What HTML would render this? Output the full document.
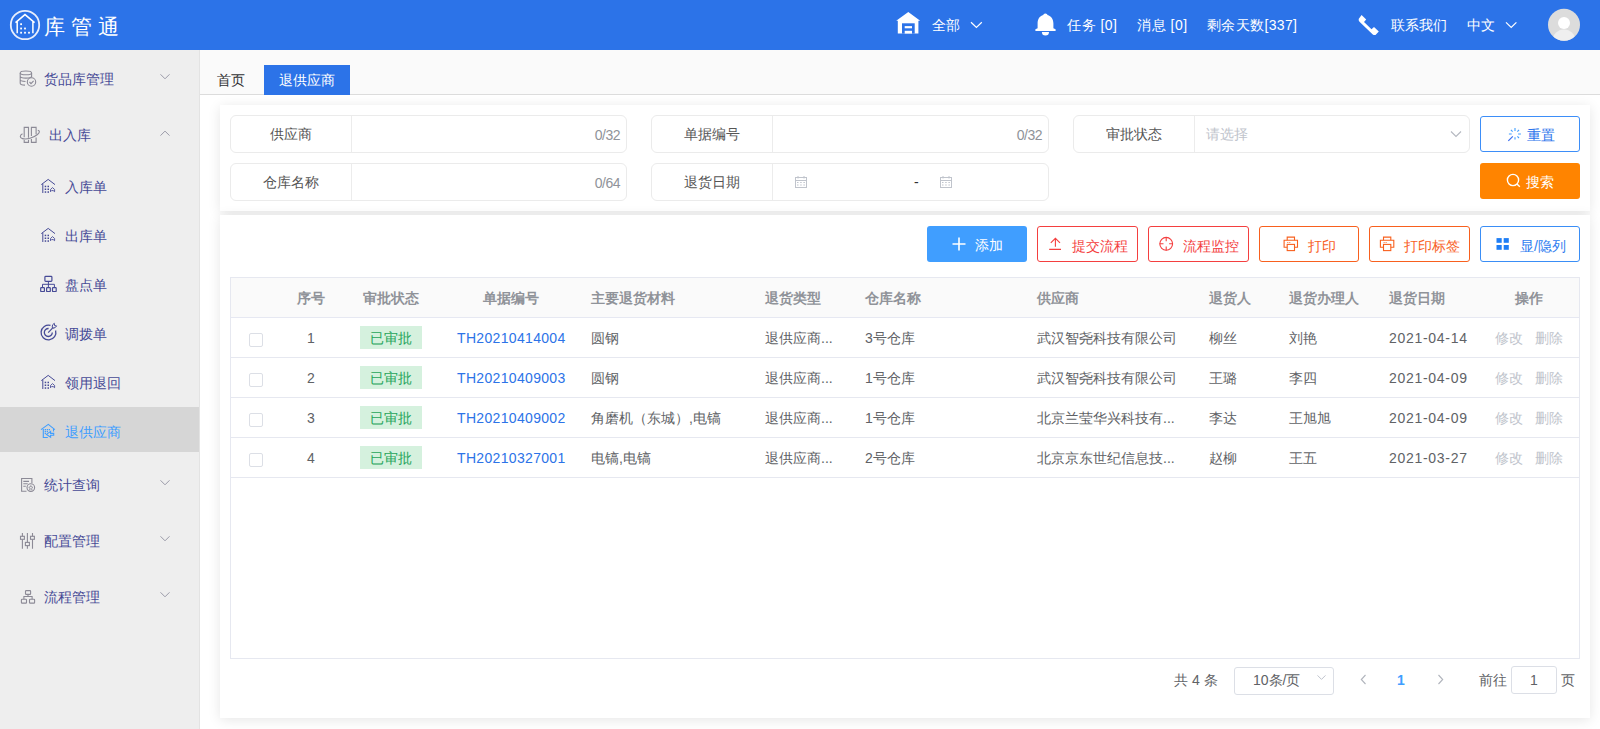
<!DOCTYPE html>
<html><head><meta charset="utf-8">
<style>
*{margin:0;padding:0;box-sizing:border-box}
html,body{width:1600px;height:729px;overflow:hidden;background:#fff;font-family:"Liberation Sans",sans-serif;font-size:14px;color:#606266}
.abs{position:absolute}
#hdr{position:absolute;left:0;top:0;width:1600px;height:50px;background:#2c73e8;color:#fff}
#side{position:absolute;left:0;top:50px;width:200px;height:679px;background:#eeeeee;border-right:1px solid #e3e3e3}
.t{position:absolute;white-space:nowrap;line-height:20px}
.card{position:absolute;background:#fff;box-shadow:0 2px 12px 0 rgba(0,0,0,.1)}
.inp{position:absolute;height:38px;border:1px solid #ebebeb;border-radius:6px;background:#fff}
.lb{position:absolute;left:0;top:0;width:121px;height:36px;border-right:1px solid #ececec;text-align:center;line-height:36px;color:#555}
.cnt{position:absolute;right:6px;top:9px;line-height:20px;font-size:14px;letter-spacing:-0.5px;color:#909399}
.ph{position:absolute;left:132px;top:8px;line-height:20px;color:#c0c4cc}
.btn{position:absolute;border-radius:3px;box-sizing:border-box}
.ob{width:100px;height:36px;border:1px solid;background:#fff}
.th{color:#909399;font-weight:bold}
.td{color:#606266}
.cb{width:14px;height:14px;border:1px solid #dcdfe6;border-radius:2px;background:#fff}
.tag{width:62px;height:23px;background:#d5f1de;color:#25a55a;text-align:center;line-height:25px}
</style></head><body>
<div id="hdr">
<svg class="abs" style="left:0;top:0" width="130" height="50" viewBox="0 0 130 50">
<circle cx="25" cy="25" r="14.2" fill="none" stroke="#e8eefc" stroke-width="1.8"/>
<path d="M15.5 22.6 L25 14.6 L34.6 22.6 M17.2 21.4 V33.2 M32.9 21.4 V33.2" fill="none" stroke="#fff" stroke-width="1.5"/>
<g fill="#fff"><rect x="20.2" y="23.3" width="1.8" height="1.8"/><rect x="20.2" y="27.6" width="1.8" height="1.8"/><rect x="24.1" y="27.6" width="1.8" height="1.8"/><rect x="20.2" y="31.8" width="1.8" height="1.8"/><rect x="24.1" y="31.8" width="1.8" height="1.8"/><rect x="28.1" y="31.8" width="1.8" height="1.8"/></g>
</svg>
<div class="t" style="left:44px;top:14px;font-size:21px;line-height:26px;letter-spacing:6px;color:#fff">库管通</div>
<svg class="abs" style="left:890px;top:0" width="100" height="50" viewBox="890 0 100 50">
<path d="M908.3 12 L920.2 20.8 L918.4 20.8 V33.6 H897.8 V20.8 H896.2 Z" fill="#fff"/>
<rect x="902" y="23.3" width="12.7" height="10.3" fill="#2c73e8"/>
<rect x="904.7" y="26.1" width="7.3" height="2.2" fill="#fff"/><rect x="904.7" y="30.8" width="7.3" height="2.8" fill="#fff"/>
<path d="M971 22.3 L976.4 27.5 L981.8 22.3" fill="none" stroke="#fff" stroke-width="1.2"/>
</svg>
<div class="t" style="left:932px;top:15px">全部</div>
<svg class="abs" style="left:1030px;top:0" width="30" height="50" viewBox="1030 0 30 50">
<path d="M1045.3 13.6 C1044 13.6 1043.5 14.5 1043.3 15.1 C1039.5 16.2 1037.6 19.5 1037.6 23.5 V28.3 L1035.4 29.2 V31.1 H1055.6 V29.2 L1053.4 28.3 V23.5 C1053.4 19.5 1051.3 16.2 1047.5 15.1 C1047.3 14.5 1046.7 13.6 1045.3 13.6 Z" fill="#fff"/>
<path d="M1041.9 32 H1049 A3.55 3.6 0 0 1 1041.9 32 Z" fill="#fff"/>
</svg>
<div class="t" style="left:1067px;top:15px;letter-spacing:0.5px">任务 [0]</div>
<div class="t" style="left:1137px;top:15px;letter-spacing:0.55px">消息 [0]</div>
<div class="t" style="left:1207px;top:15px;letter-spacing:0.35px">剩余天数[337]</div>
<svg class="abs" style="left:1350px;top:0" width="40" height="50" viewBox="1350 0 40 50">
<path d="M1361.6 15 L1366.2 19.5 L1364 22 L1371.5 29.2 L1374 27 L1378.8 31.6 L1375.5 35 C1374.5 35.3 1373.5 35 1372.5 34.2 L1359.5 21.8 C1358.8 21 1358.5 20 1358.8 18.8 Z" fill="#fff"/>
</svg>
<div class="t" style="left:1391px;top:15px">联系我们</div>
<div class="t" style="left:1467px;top:15px">中文</div>
<svg class="abs" style="left:1500px;top:0" width="100" height="50" viewBox="1500 0 100 50">
<path d="M1506 22.3 L1511.2 27.5 L1516.4 22.3" fill="none" stroke="#fff" stroke-width="1.2"/>
<defs><clipPath id="av"><circle cx="1564" cy="24.7" r="16"/></clipPath></defs>
<circle cx="1564" cy="24.7" r="16" fill="#dcdcdc"/>
<g clip-path="url(#av)"><ellipse cx="1564" cy="41" rx="11.5" ry="11.5" fill="#efefef"/></g>
<circle cx="1564" cy="22.9" r="6" fill="#fff"/>
</svg>
</div>
<div id="side">
<div class="abs" style="left:0;top:357px;width:199px;height:45px;background:#d6d6d6"></div>
<svg class="abs" style="left:0;top:-50px" width="200" height="729" viewBox="0 0 200 729">
<g fill="none" stroke="#8c8a96" stroke-width="1.1">
 <!-- db icon -->
 <ellipse cx="25.9" cy="72.9" rx="5.7" ry="1.9"/>
 <path d="M20.2 72.9 V83.2 C20.2 84.3 22.2 85 25 85.1 M31.6 72.9 V77.5 M20.2 76.3 C20.2 77.4 22.6 78.1 25.9 78.1 C29.2 78.1 31.6 77.4 31.6 76.3 M20.2 79.8 C20.2 80.8 22.3 81.4 25.5 81.5"/>
 <circle cx="31.5" cy="82" r="4.2" fill="#eeeeee"/>
 <path d="M29.5 82 L31 83.6 L33.6 80.8"/>
 <!-- in-out icon -->
 <path d="M24.2 137.2 V127.4 H28.5 V137.8 M24.2 140 V142.4 H28.5 V139.7 M31.4 136 V127.4 H36.1 V134.2 M31.4 139 V142.4 H36.1 V137.6"/>
 <path d="M22.5 133.8 C19.6 135.5 19.5 137.7 22.5 138.6 C26.5 139.8 33.5 137.8 37.5 134.5 C40 132.5 40 130.8 37.8 130.2"/>
 <!-- stats icon -->
 <path d="M26.5 491.2 H21.6 V478.5 H31.9 V483"/>
 <path d="M23.3 481.4 H29 M23.3 483.8 H27.7 M23.3 486.3 H25.8"/>
 <circle cx="30.8" cy="487.6" r="3.8"/>
 <path d="M30.8 485.5 L31.5 487 L32.8 487.2 L31.8 488.2 L32.1 489.6 L30.8 488.9 L29.5 489.6 L29.8 488.2 L28.8 487.2 L30.1 487 Z" stroke-width="0.8"/>
 <!-- config icon -->
 <path d="M22.4 533 V548.7 M27.4 533 V548.7 M32.5 533 V548.7"/>
 <rect x="20.5" y="536.3" width="3.9" height="3" fill="#eeeeee"/>
 <rect x="30.5" y="536.3" width="3.9" height="3" fill="#eeeeee"/>
 <rect x="25.4" y="542.4" width="4" height="3.2" fill="#eeeeee"/>
 <!-- flow icon -->
 <rect x="25.5" y="590.6" width="5.1" height="3.8" rx="0.7"/>
 <path d="M28 594.4 V596.5 M23.9 599.3 V596.5 H32.1 V599.3"/>
 <rect x="21.4" y="599.3" width="5.1" height="3.8" rx="0.7"/><rect x="29.5" y="599.3" width="5.1" height="3.8" rx="0.7"/>
</g>
<g fill="none" stroke="#9a9aa8" stroke-width="1">
 <path d="M160.5 74.3 L165 78.8 L169.5 74.3"/>
 <path d="M160.5 135.6 L165 131.1 L169.5 135.6"/>
 <path d="M160.5 480.3 L165 484.8 L169.5 480.3"/>
 <path d="M160.5 536.3 L165 540.8 L169.5 536.3"/>
 <path d="M160.5 592.3 L165 596.8 L169.5 592.3"/>
</g>
<g fill="none" stroke="#464a96" stroke-width="1">
 <!-- house icons (入库单, 出库单, 领用退回) -->
 <g id="hs"><path d="M41.3 184.6 L48.2 179.4 L55 184.6 M42.8 183.8 V193"/>
 <g fill="#464a96" stroke="none"><rect x="44.7" y="185.7" width="1.5" height="1.5"/><rect x="47.5" y="185.7" width="1.5" height="1.5"/><rect x="44.7" y="188.5" width="1.5" height="1.5"/><rect x="47.5" y="188.5" width="1.5" height="1.5"/><rect x="44.7" y="191.3" width="1.5" height="1.5"/><rect x="47.5" y="191.3" width="1.5" height="1.5"/></g>
 <path d="M50.5 189.5 L52.5 187.6 L54.6 189.5 V191.7 L53.2 190.6 H51.6 L50.5 191.7 Z" stroke-width="0.9"/></g>
 <use href="#hs" y="49"/>
 <use href="#hs" y="196"/>
 <!-- org chart (盘点单) -->
 <rect x="44.9" y="276.4" width="7" height="4.9" rx="0.8" stroke-width="1.2"/>
 <path d="M48.4 281.3 V287.6 M42.5 287.6 V284.3 H54.4 V287.6"/>
 <rect x="40.7" y="287.7" width="3.7" height="3.8" rx="0.6" stroke-width="1.2"/><rect x="46.6" y="287.7" width="3.7" height="3.8" rx="0.6" stroke-width="1.2"/><rect x="52.5" y="287.7" width="3.7" height="3.8" rx="0.6" stroke-width="1.2"/>
 <!-- target (调拨单) -->
 <path d="M50.5 325.4 A7.4 7.4 0 1 0 55.6 330.5" stroke-width="1.3"/>
 <path d="M48.6 328.5 A4 4 0 1 0 52.3 332.4" stroke-width="1.3"/>
 <path d="M48.2 332.6 L53.2 327.4" stroke-width="1.2"/>
 <path d="M52.2 327.2 L52.6 324.8 L54.3 323.3 L54.6 325.6 L56.6 325.9 L55.2 327.6 L53 328.2 Z" stroke-width="1"/>
</g>
<!-- selected house icon (blue) -->
<g fill="none" stroke="#409eff" stroke-width="1.1">
 <path d="M41 429.6 L48.3 424.4 L54.9 429.6 M43.3 429 V437.5 H47.8 M53.5 429 V431.4"/>
 <path d="M50.6 431.4 L46.5 434.4 L50.6 437.3 V435.3 H53.7 V433.4 H50.6 Z"/>
</g>
<g fill="#409eff"><rect x="44.7" y="429" width="1.3" height="1.3"/><rect x="46.7" y="429" width="1.3" height="1.3"/><rect x="48.7" y="429" width="1.3" height="1.3"/><rect x="44.7" y="430.9" width="1.3" height="1.3"/><rect x="46.7" y="430.9" width="1.3" height="1.3"/><rect x="44.7" y="432.8" width="1.3" height="1.3"/></g>
</svg>
<div class="t" style="left:44px;top:19px;color:#464a96">货品库管理</div>
<div class="t" style="left:49px;top:75px;color:#464a96">出入库</div>
<div class="t" style="left:65px;top:127px;color:#464a96">入库单</div>
<div class="t" style="left:65px;top:176px;color:#464a96">出库单</div>
<div class="t" style="left:65px;top:225px;color:#464a96">盘点单</div>
<div class="t" style="left:65px;top:274px;color:#464a96">调拨单</div>
<div class="t" style="left:65px;top:323px;color:#464a96">领用退回</div>
<div class="t" style="left:65px;top:372px;color:#409eff">退供应商</div>
<div class="t" style="left:44px;top:425px;color:#464a96">统计查询</div>
<div class="t" style="left:44px;top:481px;color:#464a96">配置管理</div>
<div class="t" style="left:44px;top:537px;color:#464a96">流程管理</div>
</div>
<!-- tabs -->
<div class="abs" style="left:200px;top:50px;width:1400px;height:45px;background:#fafafa"></div>
<div class="abs" style="left:200px;top:94px;width:1400px;height:1px;background:#dcdcdc"></div>
<div class="t" style="left:217px;top:70px;color:#303133">首页</div>
<div class="abs" style="left:264px;top:65px;width:86px;height:30px;background:#2c73e8"></div>
<div class="t" style="left:279px;top:70px;color:#fff">退供应商</div>
<!-- card1 -->
<div class="card" style="left:220px;top:105px;width:1370px;height:106px"></div>
<div class="inp" style="left:230px;top:115px;width:397px"><div class="lb">供应商</div><span class="cnt">0/32</span></div>
<div class="inp" style="left:651px;top:115px;width:398px"><div class="lb">单据编号</div><span class="cnt">0/32</span></div>
<div class="inp" style="left:1073px;top:115px;width:397px"><div class="lb">审批状态</div><span class="ph">请选择</span>
<svg class="abs" style="right:7px;top:14px" width="12" height="8" viewBox="0 0 12 8"><path d="M1 1.5 L6 6.5 L11 1.5" fill="none" stroke="#b4b8c0" stroke-width="1.1"/></svg></div>
<div class="inp" style="left:230px;top:163px;width:397px"><div class="lb">仓库名称</div><span class="cnt">0/64</span></div>
<div class="inp" style="left:651px;top:163px;width:398px"><div class="lb">退货日期</div><span class="t" style="left:262px;top:8px;color:#303133">-</span></div>
<svg width="12" height="12" viewBox="0 0 12 12" style="position:absolute;left:795px;top:176px"><g fill="none" stroke="#c0c4cc" stroke-width="1"><rect x="0.5" y="1.5" width="11" height="10"/><path d="M0.5 4.5 H11.5 M3 0 V2.5 M9 0 V2.5"/></g><g fill="#c0c4cc"><rect x="2" y="6" width="1.5" height="1"/><rect x="5.2" y="6" width="1.5" height="1"/><rect x="8.4" y="6" width="1.5" height="1"/><rect x="2" y="8.5" width="1.5" height="1"/><rect x="5.2" y="8.5" width="1.5" height="1"/><rect x="8.4" y="8.5" width="1.5" height="1"/></g></svg><svg width="12" height="12" viewBox="0 0 12 12" style="position:absolute;left:940px;top:176px"><g fill="none" stroke="#c0c4cc" stroke-width="1"><rect x="0.5" y="1.5" width="11" height="10"/><path d="M0.5 4.5 H11.5 M3 0 V2.5 M9 0 V2.5"/></g><g fill="#c0c4cc"><rect x="2" y="6" width="1.5" height="1"/><rect x="5.2" y="6" width="1.5" height="1"/><rect x="8.4" y="6" width="1.5" height="1"/><rect x="2" y="8.5" width="1.5" height="1"/><rect x="5.2" y="8.5" width="1.5" height="1"/><rect x="8.4" y="8.5" width="1.5" height="1"/></g></svg>
<div class="btn" style="left:1480px;top:116px;width:100px;height:36px;border:1px solid #3d8ef8;color:#2a74ec">
<svg class="abs" style="left:26px;top:10px" width="16" height="16" viewBox="0 0 16 16"><g stroke="#409eff" stroke-width="1.1" fill="none"><path d="M8 1 V3.9 M8 10.2 V12.5 M1.9 7 H4.7 M11.1 7 H13.9 M3.9 2.9 L5.6 4.6 M10.4 9.4 L12 11 M12 2.9 L10.4 4.6"/><path d="M5.8 9.3 L1.3 13.8" stroke="#3d6ef0" stroke-width="1.2"/></g></svg>
<span class="t" style="left:46px;top:8px">重置</span></div>
<div class="btn" style="left:1480px;top:163px;width:100px;height:36px;background:#ff8400;color:#fff">
<svg class="abs" style="left:26px;top:10px" width="16" height="16" viewBox="0 0 16 16"><circle cx="7" cy="7" r="5.6" fill="none" stroke="#fff" stroke-width="1.4"/><path d="M11 11 L13.8 13.8" stroke="#fff" stroke-width="1.4"/></svg>
<span class="t" style="left:46px;top:9px">搜索</span></div>
<!-- card2 -->
<div class="card" style="left:220px;top:215px;width:1370px;height:503px"></div>
<div class="btn" style="left:927px;top:226px;width:100px;height:36px;background:#409eff;color:#fff">
<svg class="abs" style="left:25px;top:11px" width="14" height="14" viewBox="0 0 14 14"><path d="M7 0.5 V13.5 M0.5 7 H13.5" stroke="#fff" stroke-width="1.6"/></svg>
<span class="t" style="left:48px;top:9px">添加</span></div>
<div class="btn ob" style="left:1037px;top:226px;width:101px;border-color:#f43f3f;color:#f43f3f">
<svg class="abs" style="left:-1px;top:-1px" width="100" height="36" viewBox="0 0 100 36"><path d="M18.4 12.6 V20.7 M13.8 16.9 L18.4 12.3 L23 16.9 M12.2 23.4 H24" fill="none" stroke="#f43f3f" stroke-width="1.1"/></svg>
<span class="t" style="left:34px;top:9px">提交流程</span></div>
<div class="btn ob" style="left:1148px;top:226px;width:101px;border-color:#f43f3f;color:#f43f3f">
<svg class="abs" style="left:-1px;top:-1px" width="100" height="36" viewBox="0 0 100 36"><g fill="none" stroke="#f43f3f" stroke-width="1.1"><circle cx="18.2" cy="17.8" r="6.4"/><path d="M18.2 11.2 V15.2 M18.2 20.5 V24.5 M11.8 17.8 H15.5 M21.1 17.8 H24.6"/></g></svg>
<span class="t" style="left:34px;top:9px">流程监控</span></div>
<div class="btn ob" style="left:1259px;top:226px;border-color:#f8601e;color:#f8601e">
<svg class="abs" style="left:-1px;top:-1px" width="100" height="36" viewBox="0 0 100 36"><g fill="none" stroke="#f8601e" stroke-width="1.1"><path d="M28.2 14.2 V11.1 H35.5 V14.2"/><path d="M28.2 21.3 H25.1 V14.2 H38.5 V21.3 H35.5"/><rect x="28.2" y="18.4" width="7.3" height="6.2"/></g><g fill="#f8601e"><rect x="28.3" y="16.1" width="1" height="0.9"/><rect x="30.3" y="16.1" width="1" height="0.9"/></g></svg>
<span class="t" style="left:48px;top:9px">打印</span></div>
<div class="btn ob" style="left:1369px;top:226px;width:101px;border-color:#f8601e;color:#f8601e">
<svg class="abs" style="left:-1px;top:-1px" width="100" height="36" viewBox="0 0 100 36"><g fill="none" stroke="#f8601e" stroke-width="1.1"><path d="M14.5 14.2 V11.1 H21.8 V14.2"/><path d="M14.5 21.3 H11.4 V14.2 H24.8 V21.3 H21.8"/><rect x="14.5" y="18.4" width="7.3" height="6.2"/></g><g fill="#f8601e"><rect x="14.6" y="16.1" width="1" height="0.9"/><rect x="16.6" y="16.1" width="1" height="0.9"/></g></svg>
<span class="t" style="left:34px;top:9px">打印标签</span></div>
<div class="btn ob" style="left:1480px;top:226px;border-color:#3a8ef6;color:#2f7df0">
<svg class="abs" style="left:-1px;top:-1px" width="100" height="36" viewBox="0 0 100 36"><g fill="#1f7ef5"><rect x="16.5" y="12.1" width="5.2" height="4.7"/><rect x="23.7" y="12.1" width="5.1" height="4.7"/><rect x="16.5" y="19" width="5.2" height="4.8"/><rect x="23.7" y="19" width="5.1" height="4.8"/></g></svg>
<span class="t" style="left:39px;top:9px">显/隐列</span></div>
<!-- table -->
<div class="abs" style="left:230px;top:277px;width:1350px;height:382px;border:1px solid #e6e8f0"></div>
<div class="abs" style="left:231px;top:278px;width:1348px;height:40px;background:#fafafa;border-bottom:1px solid #e6e8f2"></div>
<div class="t th" style="left:311px;top:288px;width:120px;margin-left:-60px;text-align:center">序号</div>
<div class="t th" style="left:391px;top:288px;width:120px;margin-left:-60px;text-align:center">审批状态</div>
<div class="t th" style="left:511px;top:288px;width:120px;margin-left:-60px;text-align:center">单据编号</div>
<div class="t th" style="left:591px;top:288px">主要退货材料</div>
<div class="t th" style="left:765px;top:288px">退货类型</div>
<div class="t th" style="left:865px;top:288px">仓库名称</div>
<div class="t th" style="left:1037px;top:288px">供应商</div>
<div class="t th" style="left:1209px;top:288px">退货人</div>
<div class="t th" style="left:1289px;top:288px">退货办理人</div>
<div class="t th" style="left:1389px;top:288px">退货日期</div>
<div class="t th" style="left:1529px;top:288px;width:120px;margin-left:-60px;text-align:center">操作</div>
<div class="abs cb" style="left:249px;top:333px"></div>
<div class="t td" style="left:251px;top:328px;width:120px;text-align:center">1</div>
<div class="abs tag" style="left:360px;top:326px">已审批</div>
<div class="t td" style="left:457px;top:328px;color:#2c73e8;letter-spacing:0.33px">TH20210414004</div>
<div class="t td" style="left:591px;top:328px">圆钢</div>
<div class="t td" style="left:765px;top:328px">退供应商...</div>
<div class="t td" style="left:865px;top:328px">3号仓库</div>
<div class="t td" style="left:1037px;top:328px">武汉智尧科技有限公司</div>
<div class="t td" style="left:1209px;top:328px">柳丝</div>
<div class="t td" style="left:1289px;top:328px">刘艳</div>
<div class="t td" style="left:1389px;top:328px;letter-spacing:0.7px">2021-04-14</div>
<div class="t td" style="left:1495px;top:328px;color:#c0c4cc">修改</div>
<div class="t td" style="left:1535px;top:328px;color:#c0c4cc">删除</div>
<div class="abs" style="left:231px;top:357px;width:1348px;height:1px;background:#e6e8f0"></div>
<div class="abs cb" style="left:249px;top:373px"></div>
<div class="t td" style="left:251px;top:368px;width:120px;text-align:center">2</div>
<div class="abs tag" style="left:360px;top:366px">已审批</div>
<div class="t td" style="left:457px;top:368px;color:#2c73e8;letter-spacing:0.33px">TH20210409003</div>
<div class="t td" style="left:591px;top:368px">圆钢</div>
<div class="t td" style="left:765px;top:368px">退供应商...</div>
<div class="t td" style="left:865px;top:368px">1号仓库</div>
<div class="t td" style="left:1037px;top:368px">武汉智尧科技有限公司</div>
<div class="t td" style="left:1209px;top:368px">王璐</div>
<div class="t td" style="left:1289px;top:368px">李四</div>
<div class="t td" style="left:1389px;top:368px;letter-spacing:0.7px">2021-04-09</div>
<div class="t td" style="left:1495px;top:368px;color:#c0c4cc">修改</div>
<div class="t td" style="left:1535px;top:368px;color:#c0c4cc">删除</div>
<div class="abs" style="left:231px;top:397px;width:1348px;height:1px;background:#e6e8f0"></div>
<div class="abs cb" style="left:249px;top:413px"></div>
<div class="t td" style="left:251px;top:408px;width:120px;text-align:center">3</div>
<div class="abs tag" style="left:360px;top:406px">已审批</div>
<div class="t td" style="left:457px;top:408px;color:#2c73e8;letter-spacing:0.33px">TH20210409002</div>
<div class="t td" style="left:591px;top:408px">角磨机（东城）,电镐</div>
<div class="t td" style="left:765px;top:408px">退供应商...</div>
<div class="t td" style="left:865px;top:408px">1号仓库</div>
<div class="t td" style="left:1037px;top:408px">北京兰莹华兴科技有...</div>
<div class="t td" style="left:1209px;top:408px">李达</div>
<div class="t td" style="left:1289px;top:408px">王旭旭</div>
<div class="t td" style="left:1389px;top:408px;letter-spacing:0.7px">2021-04-09</div>
<div class="t td" style="left:1495px;top:408px;color:#c0c4cc">修改</div>
<div class="t td" style="left:1535px;top:408px;color:#c0c4cc">删除</div>
<div class="abs" style="left:231px;top:437px;width:1348px;height:1px;background:#e6e8f0"></div>
<div class="abs cb" style="left:249px;top:453px"></div>
<div class="t td" style="left:251px;top:448px;width:120px;text-align:center">4</div>
<div class="abs tag" style="left:360px;top:446px">已审批</div>
<div class="t td" style="left:457px;top:448px;color:#2c73e8;letter-spacing:0.33px">TH20210327001</div>
<div class="t td" style="left:591px;top:448px">电镐,电镐</div>
<div class="t td" style="left:765px;top:448px">退供应商...</div>
<div class="t td" style="left:865px;top:448px">2号仓库</div>
<div class="t td" style="left:1037px;top:448px">北京京东世纪信息技...</div>
<div class="t td" style="left:1209px;top:448px">赵柳</div>
<div class="t td" style="left:1289px;top:448px">王五</div>
<div class="t td" style="left:1389px;top:448px;letter-spacing:0.7px">2021-03-27</div>
<div class="t td" style="left:1495px;top:448px;color:#c0c4cc">修改</div>
<div class="t td" style="left:1535px;top:448px;color:#c0c4cc">删除</div>
<div class="abs" style="left:231px;top:477px;width:1348px;height:1px;background:#e6e8f0"></div>

<!-- pagination -->
<div class="t" style="left:1174px;top:670px;color:#606266">共 4 条</div>
<div class="abs" style="left:1234px;top:667px;width:100px;height:28px;border:1px solid #dcdfe6;border-radius:3px"></div>
<div class="t" style="left:1253px;top:670px;color:#606266">10条/页</div>
<svg class="abs" style="left:1300px;top:660px" width="300" height="40" viewBox="1300 660 300 40"><g fill="none" stroke-width="1.1">
<path d="M1317.5 675.4 L1321.5 679.4 L1325.5 675.4" stroke="#b8bcc6" stroke-width="0.9"/>
<path d="M1365.5 675 L1361.3 679.5 L1365.5 684" stroke="#b0b4bc"/>
<path d="M1438.5 675 L1442.7 679.5 L1438.5 684" stroke="#b0b4bc"/>
</g></svg>
<div class="t" style="left:1397px;top:670px;color:#409eff;font-weight:bold">1</div>
<div class="t" style="left:1479px;top:670px;color:#606266">前往</div>
<div class="abs" style="left:1511px;top:666px;width:46px;height:28px;border:1px solid #dcdfe6;border-radius:3px"></div>
<div class="t" style="left:1530px;top:670px;color:#606266">1</div>
<div class="t" style="left:1561px;top:670px;color:#606266">页</div>
</body></html>
